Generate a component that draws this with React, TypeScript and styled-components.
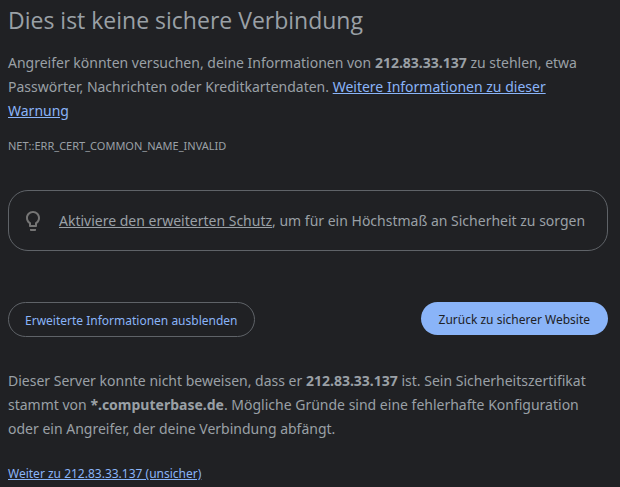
import React from "react";
import styled, { createGlobalStyle } from "styled-components";

const GlobalStyle = createGlobalStyle`
  body {
    margin: 0;
    background: #202124;
    color: #9aa0a6;
    font-family: "Segoe UI", "Noto Sans", "Open Sans", sans-serif;
    font-size: 14px;
    line-height: 24px;
  }
`;

const Page = styled.main`
  padding: 4px 12px 0 8px;
`;

const Title = styled.h1`
  margin: 0 0 15px;
  font-family: "Segoe UI", "Open Sans", sans-serif;
  font-size: 23px;
  font-weight: 400;
  line-height: 32px;
`;

const Paragraph = styled.p`
  margin: 0;
`;

const Link = styled.a`
  color: #8ab4f8;
  text-decoration: underline;
`;

const ErrorCode = styled.div`
  margin-top: 14px;
  font-size: 11px;
  line-height: 18px;
`;

const Promo = styled.section`
  display: flex;
  align-items: center;
  gap: 14px;
  margin-top: 35px;
  padding: 18px 12px 17px 12px;
  border: 1px solid #5f6368;
  border-radius: 20px;
`;

const BulbIcon = styled.svg`
  flex: none;
  width: 24px;
  height: 24px;
  fill: #757575;
`;

const PromoLink = styled.a`
  color: inherit;
  text-decoration: underline;
`;

const Actions = styled.div`
  display: flex;
  align-items: flex-start;
  justify-content: space-between;
  margin: 51px 0 32px;
`;

const Button = styled.button<{ $primary?: boolean }>`
  padding: ${(p) => (p.$primary ? "9px 18px 7px" : "9px 16px 7px")};
  border: ${(p) => (p.$primary ? "0" : "1px solid #5f6368")};
  border-radius: 20px;
  background: ${(p) => (p.$primary ? "#8ab4f8" : "transparent")};
  color: ${(p) => (p.$primary ? "#202124" : "#8ab4f8")};
  font-family: inherit;
  font-size: 12px;
  line-height: 17px;
  cursor: pointer;
`;

const Proceed = styled.p`
  margin: 24px 0 0;
  font-size: 12px;
  line-height: 18px;
`;

export default function App() {
  return (
    <>
      <GlobalStyle />
      <Page>
        <Title>Dies ist keine sichere Verbindung</Title>
        <Paragraph>
          Angreifer könnten versuchen, deine Informationen von <strong>212.83.33.137</strong> zu
          stehlen, etwa Passwörter, Nachrichten oder Kreditkartendaten.{" "}
          <Link href="#info">Weitere Informationen zu dieser Warnung</Link>
        </Paragraph>
        <ErrorCode>NET::ERR_CERT_COMMON_NAME_INVALID</ErrorCode>
        <Promo>
          <BulbIcon viewBox="0 0 24 24" aria-hidden="true">
            <path d="M9 21c0 .55.45 1 1 1h4c.55 0 1-.45 1-1v-1H9v1zm3-19C8.14 2 5 5.14 5 9c0 2.38 1.19 4.47 3 5.74V17c0 .55.45 1 1 1h6c.55 0 1-.45 1-1v-2.26c1.81-1.27 3-3.36 3-5.74 0-3.86-3.14-7-7-7zm2.85 11.1l-.85.6V16h-4v-2.3l-.85-.6C7.8 12.16 7 10.63 7 9c0-2.76 2.24-5 5-5s5 2.24 5 5c0 1.63-.8 3.16-2.15 4.1z" />
          </BulbIcon>
          <Paragraph>
            <PromoLink href="#protection">Aktiviere den erweiterten Schutz</PromoLink>, um für ein
            Höchstmaß an Sicherheit zu sorgen
          </Paragraph>
        </Promo>
        <Actions>
          <Button type="button">Erweiterte Informationen ausblenden</Button>
          <Button type="button" $primary>
            Zurück zu sicherer Website
          </Button>
        </Actions>
        <Paragraph>
          Dieser Server konnte nicht beweisen, dass er <strong>212.83.33.137</strong> ist. Sein
          Sicherheitszertifikat stammt von <strong>*.computerbase.de</strong>. Mögliche Gründe sind
          eine fehlerhafte Konfiguration oder ein Angreifer, der deine Verbindung abfängt.
        </Paragraph>
        <Proceed>
          <Link href="#proceed">Weiter zu 212.83.33.137 (unsicher)</Link>
        </Proceed>
      </Page>
    </>
  );
}
